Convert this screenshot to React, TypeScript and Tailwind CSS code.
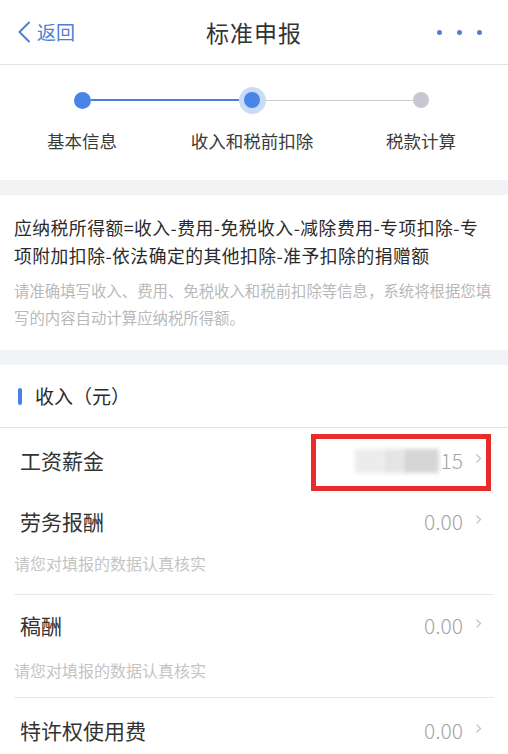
const font = { fontFamily: '"Noto Sans CJK SC", "Noto Sans", sans-serif' };

function Arrow() {
  return (
    <svg width="7" height="11" viewBox="0 0 7 11" className="ml-[12px] -mt-[6px]">
      <path d="M1.5 1.5 L5.5 5.5 L1.5 9.5" fill="none" stroke="#c4c4c4" strokeWidth="1.3" />
    </svg>
  );
}

function Value({ children }: { children: React.ReactNode }) {
  return (
    <div className="flex items-center">
      <span className="text-[21px] text-[#a5a5a5] font-light">{children}</span>
      <Arrow />
    </div>
  );
}

const hint = "请您对填报的数据认真核实";

export default function App() {
  return (
    <div className="w-[508px] h-[754px] overflow-hidden bg-white text-[#333]" style={font}>
      {/* header */}
      <div className="h-[65px] flex items-center justify-between px-[14px] border-b border-[#e2e2e2]">
        <div className="flex items-center text-[#4d7fd4] w-[100px]">
          <svg width="16" height="22" viewBox="0 0 16 22" className="ml-[2px] mr-[5px]">
            <path d="M13 1.5 L3.5 11 L13 20.5" fill="none" stroke="#4d7fd4" strokeWidth="2" strokeLinecap="round" strokeLinejoin="round" />
          </svg>
          <span className="text-[19px]">返回</span>
        </div>
        <div className="text-[23px] tracking-[1px] text-[#333]">标准申报</div>
        <div className="flex items-center justify-end gap-[15px] w-[100px] pr-[12px]">
          <span className="w-[5px] h-[5px] rounded-full bg-[#5b7fcf]" />
          <span className="w-[5px] h-[5px] rounded-full bg-[#5b7fcf]" />
          <span className="w-[5px] h-[5px] rounded-full bg-[#5b7fcf]" />
        </div>
      </div>

      {/* steps */}
      <div className="h-[115px] pt-[26px]">
        <div className="flex items-center pl-[74px] pr-[79px] h-[18px]">
          <span className="w-[17px] h-[17px] rounded-full bg-[#4a84e6]" />
          <span className="flex-1 h-[1.5px] bg-[#4f7fd2]" />
          <span className="w-[27px] h-[27px] rounded-full bg-[#c9dcf7] flex items-center justify-center">
            <span className="w-[16px] h-[16px] rounded-full bg-[#4a84e6]" />
          </span>
          <span className="flex-1 h-[1px] bg-[#c9c9cc]" />
          <span className="w-[16px] h-[16px] rounded-full bg-[#c7c7d1]" />
        </div>
        <div className="flex mt-[19px] text-[17.5px] text-[#3a3a3a]">
          <div className="w-[164px] text-center">基本信息</div>
          <div className="w-[176px] text-center">收入和税前扣除</div>
          <div className="w-[162px] text-center">税款计算</div>
        </div>
      </div>

      <div className="h-[15px] bg-[#f2f3f5]" />

      {/* formula */}
      <div className="h-[155px] pl-[14px] pr-[18px] pt-[18px]">
        <p className="text-[17.8px] tracking-[0.5px] leading-[28px] text-[#2a2a2a]">
          应纳税所得额=收入-费用-免税收入-减除费用-专项扣除-专项附加扣除-依法确定的其他扣除-准予扣除的捐赠额
        </p>
        <p className="mt-[8px] text-[15.4px] leading-[27px] text-[#b9b9b9] -mr-[6px]">
          请准确填写收入、费用、免税收入和税前扣除等信息，系统将根据您填写的内容自动计算应纳税所得额。
        </p>
      </div>

      <div className="h-[15px] bg-[#f2f3f5]" />

      {/* income */}
      <div className="h-[63px] flex items-center px-[18px] border-b border-[#e3e3e3]">
        <span className="w-[4px] h-[17px] rounded-full bg-[#4a80e4] mr-[13px]" />
        <span className="text-[19px] text-[#2a2a2a]">收入（元）</span>
      </div>

      <div className="relative h-[66px] flex items-center justify-between pl-[20px] pr-[26px]">
        <span className="text-[21px] text-[#333]">工资薪金</span>
        <div className="flex items-center">
          <span className="flex items-center mr-[2px]">
            <span className="w-[28px] h-[24px] bg-[#ececec] blur-[2px]" />
            <span className="w-[20px] h-[24px] bg-[#e4e4e4] blur-[2px]" />
            <span className="w-[36px] h-[24px] bg-[#d6d6d6] blur-[2px]" />
          </span>
          <Value>15</Value>
        </div>
        <div className="absolute left-[311px] top-[6px] w-[180px] h-[57px] border-[5px] border-[#ea2b2b]" />
      </div>

      <div className="mx-[14px] border-b border-[#e8e8e8] pb-[18px]">
        <div className="h-[56px] flex items-center justify-between pl-[6px] pr-[12px]">
          <span className="text-[21px] text-[#333]">劳务报酬</span>
          <Value>0.00</Value>
        </div>
        <div className="h-[26px] flex items-center text-[16px] text-[#c4c4c4]">{hint}</div>
      </div>

      <div className="mx-[14px] border-b border-[#e8e8e8] pb-[14px]">
        <div className="h-[62px] flex items-center justify-between pl-[6px] pr-[12px]">
          <span className="text-[21px] text-[#333]">稿酬</span>
          <Value>0.00</Value>
        </div>
        <div className="h-[26px] flex items-center text-[16px] text-[#c4c4c4]">{hint}</div>
      </div>

      <div className="mx-[14px]">
        <div className="h-[66px] flex items-center justify-between pl-[6px] pr-[12px]">
          <span className="text-[21px] text-[#333]">特许权使用费</span>
          <Value>0.00</Value>
        </div>
      </div>
    </div>
  );
}
